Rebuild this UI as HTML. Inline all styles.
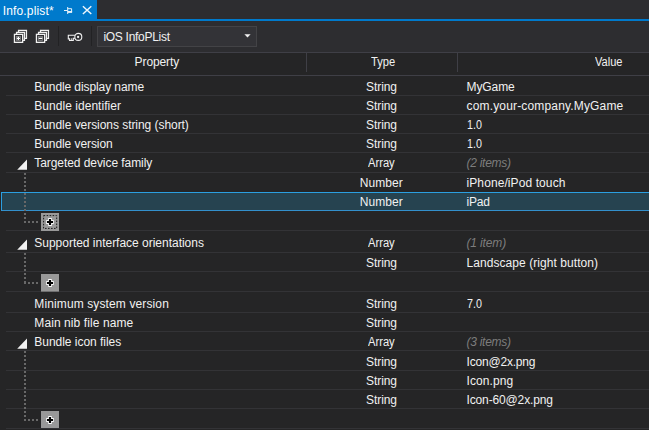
<!DOCTYPE html>
<html><head><meta charset="utf-8"><title>Info.plist</title>
<style>
html,body{margin:0;padding:0;background:#252526;}
body{width:649px;height:430px;position:relative;overflow:hidden;font-family:"Liberation Sans",sans-serif;font-size:12px;color:#f1f1f1;}
.a{position:absolute;}
.t{position:absolute;white-space:nowrap;line-height:14px;height:14px;}
.i{font-style:italic;color:#7d7d7d;}
.hl{position:absolute;left:6px;right:0;height:1px;background:#333336;}
.plus{position:absolute;left:41px;width:18px;height:18px;background:#999999;}
</style></head><body>
<div class="a" style="left:0;top:0;width:649px;height:52px;background:#2d2d30;"></div>
<div class="a" style="left:0;top:0;width:97px;height:19px;background:#007acc;"></div>
<div class="a" style="left:0;top:19px;width:649px;height:2px;background:#007acc;"></div>

<div class="t" id="tab" style="left:2.7px;top:4px;color:#fff;letter-spacing:0.160px;">Info.plist*</div>
<svg class="a" style="left:63px;top:6px" width="11" height="10" viewBox="0 0 11 10"><g fill="none" stroke="#e6f2fa" stroke-width="1"><path d="M1 4.5H4.5"/><path d="M4.7 1V8"/><path d="M4.7 2.7H8.6V6"/></g><path d="M4.7 5H9.1V6.9H4.7Z" fill="#e6f2fa"/></svg>
<svg class="a" style="left:82px;top:5px" width="11" height="10" viewBox="0 0 11 10"><path d="M0.9 1.3L9.3 9M9.3 1.3L0.9 9" stroke="#eef6fc" stroke-width="1.45" fill="none"/></svg>
<svg class="a" style="left:13px;top:28px" width="16" height="16" viewBox="0 0 16 16"><g fill="none" stroke="#f1f1f1" stroke-width="1.3"><path d="M5.55 4.35V2.45H13.45V10.4H11.45"/><path d="M3.55 6.35V4.35H11.45V12.3H9.65"/><rect x="1.45" y="6.35" width="8.2" height="8"/><rect x="3.55" y="8.45" width="4" height="3.9" stroke="#8a8a8c" stroke-width="0.8"/></g><path d="M3.8 10.4H7M5.4 8.8V12" stroke="#ffffff" stroke-width="1.3" fill="none"/></svg>
<svg class="a" style="left:35.2px;top:28px" width="16" height="16" viewBox="0 0 16 16"><g fill="none" stroke="#f1f1f1" stroke-width="1.3"><path d="M5.55 4.35V2.45H13.45V10.4H11.45"/><path d="M3.55 6.35V4.35H11.45V12.3H9.65"/><rect x="1.45" y="6.35" width="8.2" height="8"/><rect x="3.55" y="8.45" width="4" height="3.9" stroke="#8a8a8c" stroke-width="0.8"/></g><path d="M3.7 10.4H7.3" stroke="#ffffff" stroke-width="1.4" fill="none"/></svg>
<div class="a" style="left:58px;top:26px;width:1px;height:20px;background:#222224;"></div>
<svg class="a" style="left:67px;top:32px" width="16" height="10" viewBox="0 0 16 10"><g fill="#2d2d30" stroke="#f1f1f1" stroke-width="1.1" stroke-linejoin="miter"><path d="M8.6 3.2H1.3V6.9H2.5V8.5H6.3V6.3H8.6"/><circle cx="11.3" cy="4.9" r="3.5"/></g><path d="M4.4 6.3V8.5" stroke="#f1f1f1" stroke-width="0.9" fill="none"/><path d="M2.6 7.2H6.2" stroke="#b0b0b0" stroke-width="0.9" fill="none" stroke-dasharray="0.6 0.65"/><circle cx="11.1" cy="5" r="1.15" fill="#f1f1f1"/></svg>
<div class="a" style="left:91px;top:26px;width:1px;height:20px;background:#222224;"></div>
<div class="a" style="left:97px;top:26px;width:158px;height:19px;background:#333337;border:1px solid #434346;"></div>
<div class="t" id="combo" style="left:103.4px;top:30px;letter-spacing:-0.283px;">iOS InfoPList</div>
<svg class="a" style="left:244px;top:34px" width="7" height="4" viewBox="0 0 7 4"><path d="M0.4 0.2H6.6L3.5 3.4Z" fill="#f1f1f1"/></svg>
<div class="a" style="left:0;top:52px;width:649px;height:1px;background:#3f3f46;"></div>
<div class="a" style="left:0;top:75px;width:649px;height:1px;background:#3f3f46;"></div>
<div class="a" style="left:306px;top:53px;width:1px;height:19px;background:#3f3f46;"></div>
<div class="a" style="left:457px;top:53px;width:1px;height:19px;background:#3f3f46;"></div>
<div class="t" id="hP" style="left:134.6px;top:55px;letter-spacing:-0.100px;">Property</div>
<div class="t" id="hT" style="left:371px;top:55px;transform-origin:0 0;transform:scaleX(0.93);">Type</div>
<div class="t" id="hV" style="left:594.8px;top:55px;transform-origin:0 0;transform:scaleX(0.92);">Value</div>
<div class="hl" style="top:95px"></div>
<div class="hl" style="top:114px"></div>
<div class="hl" style="top:133px"></div>
<div class="hl" style="top:152px"></div>
<div class="hl" style="top:172px"></div>
<div class="hl" style="top:230px"></div>
<div class="hl" style="top:252px"></div>
<div class="hl" style="top:271px"></div>
<div class="hl" style="top:291px"></div>
<div class="hl" style="top:312px"></div>
<div class="hl" style="top:331px"></div>
<div class="hl" style="top:350px"></div>
<div class="hl" style="top:370px"></div>
<div class="hl" style="top:389px"></div>
<div class="hl" style="top:408px"></div>
<div class="hl" style="top:428px"></div>
<div class="a" style="left:1px;top:192px;width:660px;height:17px;background:#264350;border:1px solid #2b9fe0;border-bottom-color:#3390cc;"></div>
<div class="a" style="left:24px;top:173px;width:2px;height:50px;background:repeating-linear-gradient(to bottom,#686868 0,#686868 2px,transparent 2px,transparent 4px);"></div>
<div class="a" style="left:24px;top:221px;width:16px;height:2px;background:repeating-linear-gradient(to right,#686868 0,#686868 2px,transparent 2px,transparent 4px);"></div>
<div class="a" style="left:24px;top:253px;width:2px;height:31px;background:repeating-linear-gradient(to bottom,#686868 0,#686868 2px,transparent 2px,transparent 4px);"></div>
<div class="a" style="left:24px;top:282px;width:16px;height:2px;background:repeating-linear-gradient(to right,#686868 0,#686868 2px,transparent 2px,transparent 4px);"></div>
<div class="a" style="left:24px;top:351px;width:2px;height:70px;background:repeating-linear-gradient(to bottom,#686868 0,#686868 2px,transparent 2px,transparent 4px);"></div>
<div class="a" style="left:24px;top:419px;width:16px;height:2px;background:repeating-linear-gradient(to right,#686868 0,#686868 2px,transparent 2px,transparent 4px);"></div>
<svg class="a" style="left:17px;top:158px" width="11" height="13" viewBox="0 0 11 13"><path d="M10 1.5V11.8H0.2Z" fill="#f1f1f1"/></svg>
<svg class="a" style="left:17px;top:238px" width="11" height="13" viewBox="0 0 11 13"><path d="M10 1.5V11.8H0.2Z" fill="#f1f1f1"/></svg>
<svg class="a" style="left:17px;top:337px" width="11" height="13" viewBox="0 0 11 13"><path d="M10 1.5V11.8H0.2Z" fill="#f1f1f1"/></svg>
<svg class="a" style="left:41px;top:213px" width="18" height="18" viewBox="0 0 18 18"><rect width="18" height="18" fill="#999999"/><rect x="2.6" y="2.6" width="13.1" height="12.8" fill="none" stroke="#1c1c1c" stroke-width="1" stroke-dasharray="1.6 1.4"/><path d="M7.9 5.9H10.1V7.9H12.1V10.1H10.1V12.1H7.9V10.1H5.9V7.9H7.9Z" fill="#000" stroke="#fff" stroke-width="1.7" stroke-linejoin="round" paint-order="stroke"/></svg>
<svg class="a" style="left:41px;top:274px" width="18" height="17.6" viewBox="0 0 18 17.6"><rect width="18" height="17.6" fill="#999999"/><path d="M7.9 5.9H10.1V7.9H12.1V10.1H10.1V12.1H7.9V10.1H5.9V7.9H7.9Z" fill="#000" stroke="#fff" stroke-width="1.7" stroke-linejoin="round" paint-order="stroke"/></svg>
<svg class="a" style="left:41px;top:411px" width="18" height="17.4" viewBox="0 0 18 17.4"><rect width="18" height="17.4" fill="#999999"/><path d="M7.9 5.9H10.1V7.9H12.1V10.1H10.1V12.1H7.9V10.1H5.9V7.9H7.9Z" fill="#000" stroke="#fff" stroke-width="1.7" stroke-linejoin="round" paint-order="stroke"/></svg>
<div class="t" id="p0" style="left:34.3px;top:80.00px;letter-spacing:-0.089px;">Bundle display name</div>
<div class="t" id="t0" style="left:366.1px;top:80.00px;letter-spacing:-0.100px;">String</div>
<div class="t" id="v0" style="left:466.5px;top:80.00px;letter-spacing:-0.080px;">MyGame</div>
<div class="t" id="p1" style="left:34.3px;top:99.00px;letter-spacing:0.037px;">Bundle identifier</div>
<div class="t" id="t1" style="left:366.1px;top:99.00px;letter-spacing:-0.100px;">String</div>
<div class="t" id="v1" style="left:466.5px;top:99.00px;letter-spacing:0.164px;">com.your-company.MyGame</div>
<div class="t" id="p2" style="left:34.3px;top:118.00px;letter-spacing:-0.052px;">Bundle versions string (short)</div>
<div class="t" id="t2" style="left:366.1px;top:118.00px;letter-spacing:-0.100px;">String</div>
<div class="t" id="v2" style="left:466.5px;top:118.00px;transform-origin:0 0;transform:scaleX(0.894);">1.0</div>
<div class="t" id="p3" style="left:34.3px;top:137.00px;letter-spacing:-0.077px;">Bundle version</div>
<div class="t" id="t3" style="left:366.1px;top:137.00px;letter-spacing:-0.100px;">String</div>
<div class="t" id="v3" style="left:466.5px;top:137.00px;transform-origin:0 0;transform:scaleX(0.894);">1.0</div>
<div class="t" id="p4" style="left:34.3px;top:156.00px;letter-spacing:-0.067px;">Targeted device family</div>
<div class="t" id="t4" style="left:367.9px;top:156.00px;transform-origin:0 0;transform:scaleX(0.93);">Array</div>
<div class="t i" id="v4" style="left:466.5px;top:156.00px;letter-spacing:-0.275px;">(2 items)</div>
<div class="t" id="t5" style="left:359.7px;top:176.00px;letter-spacing:0.080px;">Number</div>
<div class="t" id="v5" style="left:466.5px;top:176.00px;letter-spacing:0.094px;">iPhone/iPod touch</div>
<div class="t" id="t6" style="left:359.7px;top:195.00px;letter-spacing:0.080px;">Number</div>
<div class="t" id="v6" style="left:466.5px;top:195.00px;letter-spacing:-0.233px;">iPad</div>
<div class="t" id="p7" style="left:34.3px;top:236.00px;letter-spacing:-0.016px;">Supported interface orientations</div>
<div class="t" id="t7" style="left:367.9px;top:236.00px;transform-origin:0 0;transform:scaleX(0.93);">Array</div>
<div class="t i" id="v7" style="left:466.5px;top:236.00px;letter-spacing:-0.143px;">(1 item)</div>
<div class="t" id="t8" style="left:366.1px;top:256.00px;letter-spacing:-0.100px;">String</div>
<div class="t" id="v8" style="left:466.5px;top:256.00px;letter-spacing:0.061px;">Landscape (right button)</div>
<div class="t" id="p9" style="left:34.3px;top:297.00px;letter-spacing:0.119px;">Minimum system version</div>
<div class="t" id="t9" style="left:366.1px;top:297.00px;letter-spacing:-0.100px;">String</div>
<div class="t" id="v9" style="left:466.5px;top:297.00px;transform-origin:0 0;transform:scaleX(0.894);">7.0</div>
<div class="t" id="p10" style="left:34.3px;top:316.00px;letter-spacing:0.088px;">Main nib file name</div>
<div class="t" id="t10" style="left:366.1px;top:316.00px;letter-spacing:-0.100px;">String</div>
<div class="t" id="p11" style="left:34.3px;top:335.00px;letter-spacing:-0.031px;">Bundle icon files</div>
<div class="t" id="t11" style="left:367.9px;top:335.00px;transform-origin:0 0;transform:scaleX(0.93);">Array</div>
<div class="t i" id="v11" style="left:466.5px;top:335.00px;letter-spacing:-0.275px;">(3 items)</div>
<div class="t" id="t12" style="left:366.1px;top:355.00px;letter-spacing:-0.100px;">String</div>
<div class="t" id="v12" style="left:466.5px;top:355.00px;letter-spacing:-0.190px;">Icon@2x.png</div>
<div class="t" id="t13" style="left:366.1px;top:374.00px;letter-spacing:-0.100px;">String</div>
<div class="t" id="v13" style="left:466.5px;top:374.00px;letter-spacing:0.100px;">Icon.png</div>
<div class="t" id="t14" style="left:366.1px;top:393.00px;letter-spacing:-0.100px;">String</div>
<div class="t" id="v14" style="left:466.5px;top:393.00px;letter-spacing:-0.138px;">Icon-60@2x.png</div>
</body></html>
